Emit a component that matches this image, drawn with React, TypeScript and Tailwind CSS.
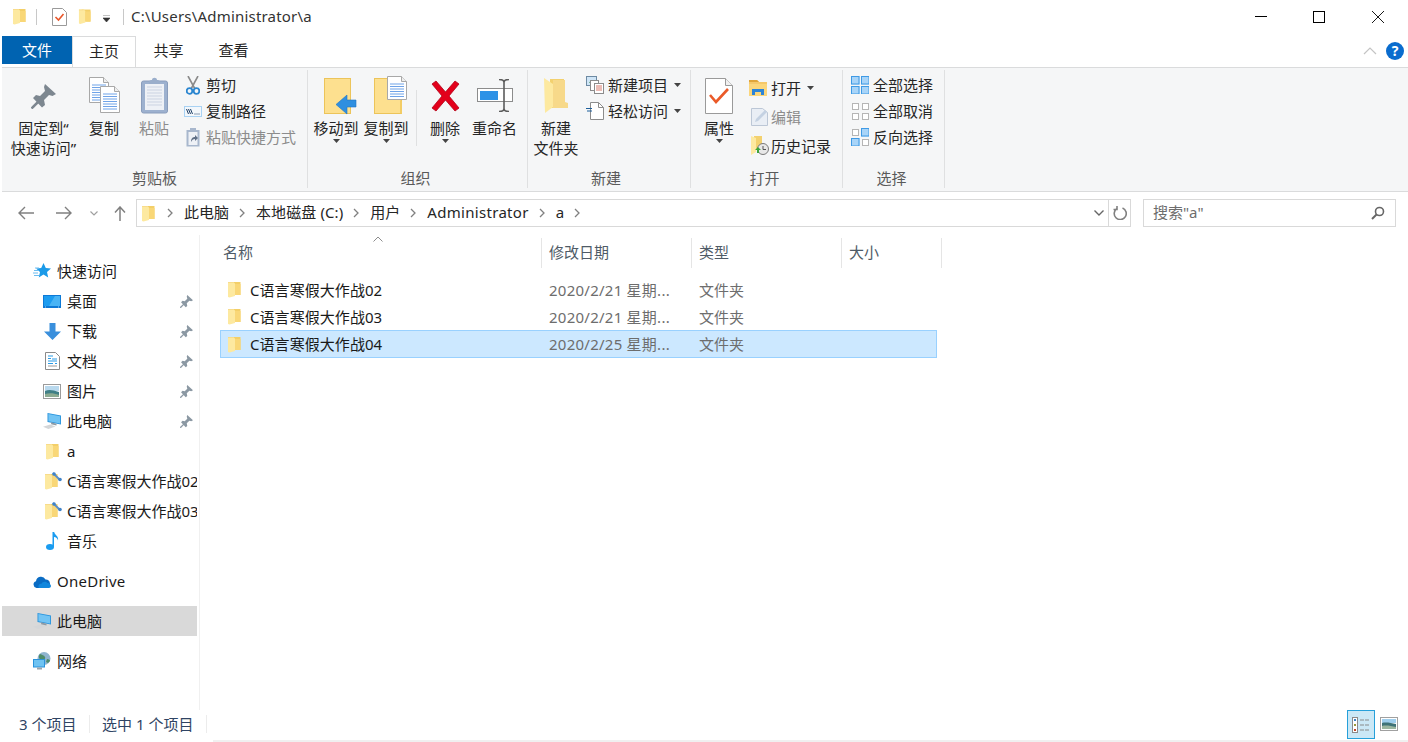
import React from "react";

type SP = { className?: string };

const Folder = ({ className = "w-[14px] h-[17px]" }: SP) => (
  <svg viewBox="0 0 14 17" className={className}>
    <path d="M4 1h9.500v13H4z" fill="#f3cf68" />
    <path d="M1 1h5l2 1.500V15L2.500 16.500 1 16z" fill="#fde9a0" />
    <path d="M1 1h5v1H1z" fill="#f8dc8c" />
    <path d="M8 3h5.500v11H8z" fill="#f9d777" />
  </svg>
);

const Pin = ({ className = "w-[13px] h-[13px]", color = "#8b98a3" }: SP & { color?: string }) => (
  <svg viewBox="0 0 25 25" className={className}>
    <path d="M14 0l11 10-3.500 2-3.500-1-5 5 1 5-3 2.500L2 14l3-3 4 1 5-5-1-4z" fill={color} />
    <path d="M0.500 24.500L8 17" stroke={color} strokeWidth="2.500" />
  </svg>
);

const Doc = ({ x, y, w, h }: { x: number; y: number; w: number; h: number }) => {
  const lines = [];
  for (let ly = y + 8; ly < y + h - 2; ly += 2.5) lines.push(ly);
  return (
    <g>
      <path d={`M${x + 0.5} ${y + 0.5}h${w - 6}l5 5v${h - 6}h-${w - 1}z`} fill="#fff" stroke="#a8a8a8" />
      <path d={`M${x + w - 5.5} ${y + 0.5}v5h5`} fill="#eee" stroke="#a8a8a8" />
      {lines.map((ly) => (
        <path key={ly} d={`M${x + 3} ${ly}h${w - 6}`} stroke="#6fa3e8" strokeWidth="1" />
      ))}
    </g>
  );
};

const Caret = ({ className = "" }: SP) => (
  <svg viewBox="0 0 7 4" className={`w-[7px] h-[4px] ${className}`}>
    <path d="M0 0h7L3.500 4z" fill="#444" />
  </svg>
);

const Chev = ({ className = "" }: SP) => (
  <svg viewBox="0 0 6 10" className={`w-[6px] h-[10px] shrink-0 ${className}`}>
    <path d="M1 1l4 4-4 4" fill="none" stroke="#808080" strokeWidth="1.300" />
  </svg>
);

function Large({
  w,
  icon,
  lines,
  caret,
  dim,
}: {
  w: string;
  icon: React.ReactNode;
  lines: string[];
  caret?: boolean;
  dim?: boolean;
}) {
  return (
    <div className={`${w} flex flex-col items-center shrink-0`}>
      <div className="h-[43px] w-full flex justify-center items-start">{icon}</div>
      {lines.map((l) => (
        <div key={l} className={`h-[20px] leading-[20px] whitespace-nowrap ${dim ? "text-[#8c8c8c]" : "text-[#262626]"}`}>
          {l}
        </div>
      ))}
      {caret && <Caret className="mt-[1px]" />}
    </div>
  );
}

function Small({
  icon,
  label,
  caret,
  dim,
  h,
  iw,
}: {
  icon: React.ReactNode;
  label: string;
  caret?: boolean;
  dim?: boolean;
  h: string;
  iw: string;
}) {
  return (
    <div className={`${h} flex items-center whitespace-nowrap`}>
      <div className={`${iw} flex justify-center shrink-0`}>{icon}</div>
      <span className={dim ? "text-[#8c8c8c]" : "text-[#262626]"}>{label}</span>
      {caret && <Caret className="ml-[6px]" />}
    </div>
  );
}

function Group({ w, label, pr = "", children }: { w: string; label: string; pr?: string; children: React.ReactNode }) {
  return (
    <div className={`${w} flex flex-col shrink-0 mb-[3px] mt-[2px] border-r border-[#dfe0e1]`}>
      <div className="h-[99px] pt-[5px] flex">{children}</div>
      <div className={`h-[20px] leading-[20px] text-center text-[#5a5a5a] ${pr}`}>{label}</div>
    </div>
  );
}

const Grid = ({ cells }: { cells: boolean[] }) => (
  <svg viewBox="0 0 18 18" className="w-[18px] h-[18px]">
    {[0, 1, 2, 3].map((i) => {
      const x = i % 2 ? 10 : 0;
      const y = i > 1 ? 10 : 0;
      return cells[i] ? (
        <g key={i}>
          <rect x={x} y={y} width="8.500" height="8.500" fill="#a8d4f8" />
          <rect x={x + 0.5} y={y + 0.5} width="7.500" height="7.500" fill="none" stroke="#3f9ae5" />
        </g>
      ) : (
        <rect key={i} x={x + 1.5} y={y + 1.5} width="6" height="6" fill="#fff" stroke="#b5b5b5" />
      );
    })}
  </svg>
);

const PC = ({ className = "w-[20px] h-[18px]" }: SP) => (
  <svg viewBox="0 0 20 18" className={className}>
    <path d="M0 15.500l8-2.500 6 2-8 3z" fill="#d4d6d8" />
    <path d="M5 0l15 3v10L5 10z" fill="#2a94dc" />
    <path d="M6 1.200l13 2.600v8L6 9.200z" fill="#72c4f4" />
    <path d="M9 10.500l6 1.500v2l-6-1.500z" fill="#8e9ba5" />
  </svg>
);

const QuickStar = () => (
  <svg viewBox="0 0 18 16" className="w-[18px] h-[16px]">
    <path d="M10.500 0l2.300 5 5.200.5-4 3.500 1.200 5.500-4.700-2.900-4.700 2.900L7 9 3 5.500 8.200 5z" fill="#1b9ae8" />
    <path d="M0 10h5M1 7.500h4M2 5h4M1 12.500h5" stroke="#6cbcf0" strokeWidth="1" />
  </svg>
);

const Desktop = () => (
  <svg viewBox="0 0 18 13" className="w-[18px] h-[13px]">
    <rect x="0" y="0" width="18" height="13" fill="#0d79d6" />
    <rect x="1" y="1" width="16" height="10" fill="#1c9cf0" />
    <path d="M6 11l6-10h5v10z" fill="#49b4f5" />
    <path d="M2 12h.800M15 12h.800" stroke="#fff" strokeWidth=".800" />
  </svg>
);

const Down = () => (
  <svg viewBox="0 0 17 17" className="w-[17px] h-[17px]">
    <path d="M5.500 0h6v8.500H17L8.500 17 0 8.500h5.500z" fill="#3a8fdc" />
  </svg>
);

const Docs = () => (
  <svg viewBox="0 0 15 18" className="w-[15px] h-[18px]">
    <path d="M.500.500h10l4 4v13H.500z" fill="#fff" stroke="#8a8a8a" />
    <path d="M3 4h5M3 6.500h3" stroke="#2b9be6" strokeWidth="1.200" />
    <path d="M7 7h5M3 9h9M3 11.500h5M10 11.500h2" stroke="#2b9be6" strokeWidth="1" />
    <path d="M3 14h9" stroke="#9a9a9a" strokeWidth="1" />
  </svg>
);

const Pic = () => (
  <svg viewBox="0 0 18 15" className="w-[18px] h-[15px]">
    <rect x=".500" y=".500" width="17" height="14" fill="#fff" stroke="#9b9b9b" />
    <rect x="2" y="2" width="14" height="5" fill="#b9d9ee" />
    <path d="M2 7c4-2 8-1 14 1v5H2z" fill="#3f7f86" />
    <path d="M2 10c4-1 9-1 14 1v2H2z" fill="#8cab91" />
  </svg>
);

const SharedFolder = () => (
  <div className="relative w-[17px] h-[17px]">
    <Folder />
    <svg viewBox="0 0 10 10" className="absolute -right-[1px] -top-[1px] w-[10px] h-[10px]">
      <path d="M1 1l7 7" stroke="#5b8fc9" strokeWidth="2" />
      <circle cx="2" cy="2" r="1.800" fill="#3f83c9" />
      <circle cx="8" cy="7.500" r="1.800" fill="#3f83c9" />
    </svg>
  </div>
);

const Music = () => (
  <svg viewBox="0 0 13 18" className="w-[13px] h-[18px]">
    <ellipse cx="4" cy="15" rx="4" ry="3" fill="#1a9cf0" />
    <path d="M6.500 0h1.700c.300 3 4.800 4 3.800 8.500C11.500 6.500 10 5 8 5v10H6.500z" fill="#1a9cf0" />
  </svg>
);

const Cloud = () => (
  <svg viewBox="0 0 18 13" className="w-[18px] h-[13px]">
    <path d="M3.500 13A3.500 3.500 0 0 1 3 6.200 5 5 0 0 1 12.500 4.600 4.300 4.300 0 0 1 14 13z" fill="#0a6cc4" />
    <path d="M6 13c-1.500-2 0-4.500 2.500-4.300C9.500 6.500 13 6 14.300 8 16.500 8 18 9.500 18 11c0 1.200-1 2-2 2z" fill="#1187dd" />
  </svg>
);

const Net = () => (
  <svg viewBox="0 0 18 18" className="w-[18px] h-[18px]">
    <circle cx="11" cy="6.500" r="6.500" fill="#8fb4cf" />
    <path d="M7 2c2 1 4 1 5 3s-2 4-4 3-3-4-1-6z" fill="#4f8c6a" />
    <path d="M14 7c2 0 3 1 3 2l-2 2-2-1z" fill="#4f8c6a" />
    <rect x="0" y="7" width="12" height="8.500" fill="#2a93dc" />
    <rect x="1" y="8" width="10" height="6.500" fill="#6fc3f2" />
    <rect x="4" y="15.500" width="5" height="2" fill="#9aa5ad" />
  </svg>
);

function Nav({
  icon,
  label,
  indent,
  pin,
  selected,
  className = "",
  labelClass = "",
}: {
  icon: React.ReactNode;
  label: string;
  indent?: boolean;
  pin?: boolean;
  selected?: boolean;
  className?: string;
  labelClass?: string;
}) {
  return (
    <div
      className={`h-[30px] w-[195px] flex items-center overflow-hidden whitespace-nowrap ${
        indent ? "pl-[41px]" : "pl-[31px]"
      } ${selected ? "bg-[#d9d9d9]" : ""} ${className}`}
    >
      <div className="w-[18px] flex justify-center shrink-0">{icon}</div>
      <span className={`ml-[6px] text-[#1a1a1a] ${labelClass}`}>{label}</span>
      {pin && (
        <div className="ml-auto mr-[4px] shrink-0">
          <Pin />
        </div>
      )}
    </div>
  );
}

function FileRow({ name, date, selected }: { name: string; date: string; selected?: boolean }) {
  return (
    <div
      className={`w-[717px] flex items-center whitespace-nowrap border ${
        selected ? "h-[28px] bg-[#cce8ff] border-[#99d1ff]" : "h-[27px] border-transparent"
      }`}
    >
      <div className="w-[29px] pl-[6px] shrink-0 flex">
        <Folder />
      </div>
      <div className="w-[299px] text-[#1a1a1a] shrink-0 tracking-[0.06px]">{name}</div>
      <div className="w-[150px] text-[#6d6d6d] shrink-0 tracking-[0.25px]">{date}</div>
      <div className="text-[#6d6d6d]">文件夹</div>
    </div>
  );
}

function HeadCell({ w, label, pl = "pl-[7px]" }: { w: string; label: string; pl?: string }) {
  return (
    <div className={`${w} h-[30px] flex items-center border-r border-[#e5e5e5] ${pl} pb-[2px] text-[#4f5b67] shrink-0`}>
      {label}
    </div>
  );
}

export default function App() {
  return (
    <div className="w-[1408px] h-[742px] overflow-hidden bg-white flex flex-col font-['Noto_Sans','Noto_Sans_CJK_SC',sans-serif] text-[15px] leading-[20px]">
      {/* title bar */}
      <div className="h-[36px] flex items-center shrink-0 pb-[3px]">
        <div className="ml-[12px]">
          <Folder className="w-[14px] h-[17px]" />
        </div>
        <div className="ml-[10px] w-px h-[16px] bg-[#c8c8c8]" />
        <svg viewBox="0 0 15 18" className="ml-[15px] w-[15px] h-[18px]">
          <path d="M.500.500h10l4 4v13H.500z" fill="#fff" stroke="#9a9a9a" />
          <path d="M3.500 9l3 3 5-6" fill="none" stroke="#e8562a" strokeWidth="1.600" />
        </svg>
        <div className="ml-[11px]">
          <Folder className="w-[13px] h-[17px]" />
        </div>
        <svg viewBox="0 0 7 7" className="ml-[12px] w-[7px] h-[7px] mt-[3px]">
          <path d="M0 0h7M0 3h7L3.500 7z" stroke="#333" strokeWidth=".600" fill="#333" />
        </svg>
        <div className="ml-[13px] w-px h-[16px] bg-[#c8c8c8]" />
        <div className="ml-[7px] text-[#333] whitespace-nowrap pb-[1px] tracking-[0.2px]">C:\Users\Administrator\a</div>
        <div className="ml-auto flex items-center">
          <svg viewBox="0 0 12 12" className="w-[12px] h-[12px]">
            <path d="M0 5.500h12" stroke="#000" />
          </svg>
          <svg viewBox="0 0 12 12" className="ml-[46px] w-[12px] h-[12px]">
            <rect x=".500" y=".500" width="11" height="11" fill="none" stroke="#000" />
          </svg>
          <svg viewBox="0 0 12 12" className="ml-[47px] mr-[24px] w-[12px] h-[12px]">
            <path d="M0 0l12 12M12 0L0 12" stroke="#000" strokeWidth=".900" />
          </svg>
        </div>
      </div>

      {/* tabs */}
      <div className="h-[31px] flex shrink-0 pl-[2px] relative">
        <div className="w-[70px] h-[28px] bg-[#0063b1] text-white flex items-center justify-center">文件</div>
        <div className="w-[64px] h-[31px] bg-white border border-b-0 border-[#dadbdc] flex items-center justify-center pb-[3px] text-[#262626]">
          主页
        </div>
        <div className="w-[65px] h-[28px] flex items-center justify-center text-[#262626]">共享</div>
        <div className="w-[65px] h-[28px] flex items-center justify-center text-[#262626]">查看</div>
        <div className="ml-auto flex items-center h-[30px] mr-[4px]">
          <svg viewBox="0 0 14 8" className="w-[14px] h-[8px]">
            <path d="M1 7l6-6 6 6" fill="none" stroke="#c4c4c4" strokeWidth="1.200" />
          </svg>
          <div className="ml-[9px] w-[18px] h-[18px] rounded-full bg-[#0a6cce] text-white flex items-center justify-center text-[14px] font-bold">
            ?
          </div>
        </div>
      </div>

      {/* ribbon */}
      <div className="h-[125px] ml-[2px] bg-[#f5f6f7] border-t border-b border-[#dadbdc] flex shrink-0">
        <Group w="w-[306px]" label="剪贴板">
          <div className="flex pl-[5px]">
            <Large
              w="w-[73px]"
              lines={["固定到“", "快速访问”"]}
              icon={<Pin className="w-[25px] h-[25px] mt-[9px]" color="#7d8790" />}
            />
            <Large
              w="w-[48px]"
              lines={["复制"]}
              icon={
                <svg viewBox="0 0 31 37" className="w-[31px] h-[37px] mt-[2px]">
                  <Doc x={0} y={0} w={20} h={26} />
                  <Doc x={11} y={9} w={20} h={27} />
                </svg>
              }
            />
            <div className="w-[2px]" />
            <Large
              w="w-[48px]"
              lines={["粘贴"]}
              dim
              icon={
                <svg viewBox="0 0 27 37" className="w-[27px] h-[37px] mt-[2px]">
                  <rect x="0.500" y="4" width="26" height="32" rx="2" fill="#9db1cf" stroke="#8a9dbc" />
                  <rect x="4" y="7" width="19" height="26" fill="#eef1f6" />
                  {[10, 13, 16, 19, 22, 25, 28].map((y) => (
                    <path key={y} d={`M6 ${y}h15`} stroke="#cbd3e2" />
                  ))}
                  <path d="M8 5c0-2 3-2 3-2 0-3 5-3 5 0 0 0 3 0 3 2v2H8z" fill="#9aaecb" />
                </svg>
              }
            />
          </div>
          <div className="ml-[6px] -mt-[3px] flex flex-col">
            <Small
              h="h-[26px]"
              iw="w-[22px] pr-[5px]"
              label="剪切"
              icon={
                <svg viewBox="0 0 14 19" className="w-[14px] h-[19px]">
                  <path d="M2 0l7 13M12 0L5 13" stroke="#8a8a8a" strokeWidth="1.600" />
                  <circle cx="3.500" cy="15" r="2.800" fill="none" stroke="#2b86d0" strokeWidth="1.800" />
                  <circle cx="10.500" cy="15" r="2.800" fill="none" stroke="#2b86d0" strokeWidth="1.800" />
                </svg>
              }
            />
            <Small
              h="h-[26px]"
              iw="w-[22px] pr-[4px]"
              label="复制路径"
              icon={
                <svg viewBox="0 0 18 11" className="w-[18px] h-[11px]">
                  <rect x="0" y="0" width="18" height="11" fill="#a9d2f3" />
                  <rect x="1" y="1" width="16" height="9" fill="#f3f7fb" />
                  <path d="M2.500 3l2 5M4.500 3l2 5M6.500 3l2 5" stroke="#1f3f66" strokeWidth="1" />
                  <path d="M10.500 8h1M12.500 8h1M14.500 8h1" stroke="#1f3f66" strokeWidth="1" />
                </svg>
              }
            />
            <Small
              h="h-[26px]"
              iw="w-[22px] pr-[5px]"
              label="粘贴快捷方式"
              dim
              icon={
                <svg viewBox="0 0 14 19" className="w-[14px] h-[19px]">
                  <rect x=".500" y="2" width="13" height="16.500" fill="#a8b7cd" />
                  <rect x="2.500" y="4" width="9" height="13" fill="#eef1f6" />
                  <path d="M4 0h6v3H4z" fill="#a8b7cd" />
                  <path d="M5 14c0-4 2-5 4-5V7l3 3-3 3v-2c-2 0-3 1-4 3z" fill="#5f6f86" />
                </svg>
              }
            />
          </div>
        </Group>

        <Group w="w-[220px]" label="组织" pr="pr-[4px]">
          <div className="flex pl-[3px]">
            <Large
              w="w-[50px]"
              lines={["移动到"]}
              caret
              icon={
                <svg viewBox="0 0 33 37" className="w-[33px] h-[37px] mt-[3px] ml-[9px]">
                  <rect x=".500" y=".500" width="26" height="35" fill="#fde08f" stroke="#ecc45a" />
                  <path d="M23 17v5h9v7h-9v7L12 26.500z" fill="#2f8fe0" stroke="#2176c2" strokeWidth=".600" />
                </svg>
              }
            />
            <Large
              w="w-[50px]"
              lines={["复制到"]}
              caret
              icon={
                <svg viewBox="0 0 33 38" className="w-[33px] h-[38px] mt-[1px] ml-[9px]">
                  <rect x=".500" y="2.500" width="27" height="35" fill="#fde08f" stroke="#ecc45a" />
                  <path d="M28 38V26c0-2-2-3-2-1v12z" fill="#f3cd66" />
                  <Doc x={13} y={0} w={20} h={24} />
                </svg>
              }
            />
            <div className="w-px h-[56px] bg-[#dfe0e1] mt-[15px] ml-[5px]" />
            <div className="w-[4px]" />
            <Large
              w="w-[48px]"
              lines={["删除"]}
              caret
              icon={
                <svg viewBox="0 0 31 32" className="w-[31px] h-[32px] mt-[5px]">
                  <path d="M2 4l4-3 9.500 11L25 1l4 3-10 12 10 12-4 3-9.500-11L6 31l-4-3 10-12z" fill="#e3001b" stroke="#b40016" strokeWidth=".800" />
                </svg>
              }
            />
            <div className="w-[1px]" />
            <Large
              w="w-[49px]"
              lines={["重命名"]}
              icon={
                <svg viewBox="0 0 36 33" className="w-[36px] h-[33px] mt-[4px]">
                  <rect x=".500" y="9.500" width="35" height="13" fill="#fff" stroke="#8c8c8c" />
                  <rect x="3" y="12" width="18" height="9" fill="#2e92e6" />
                  <path d="M22 .500c3 0 5 1 5 3v26c0 2 2 3 5 3M32 .500c-3 0-5 1-5 3M22 32.500c3 0 5-1 5-3" fill="none" stroke="#5c5c5c" strokeWidth="1.600" />
                </svg>
              }
            />
          </div>
        </Group>

        <Group w="w-[163px]" label="新建" pr="pr-[6px]">
          <div className="flex pl-[4px]">
            <Large
              w="w-[48px]"
              lines={["新建", "文件夹"]}
              icon={
                <svg viewBox="0 0 24 35" className="w-[24px] h-[35px] mt-[3px]">
                  <path d="M6 1h14v29H6z" fill="#f3d16f" />
                  <path d="M0 0l9 6v23L1 35z" fill="#fde9a0" />
                  <path d="M9 2h12v22l3 1v5H9z" fill="#f7d98a" />
                </svg>
              }
            />
          </div>
          <div className="ml-[6px] -mt-[3px] flex flex-col">
            <Small
              h="h-[26px]"
              iw="w-[22px] pr-[4px]"
              label="新建项目"
              caret
              icon={
                <svg viewBox="0 0 18 18" className="w-[18px] h-[18px]">
                  <rect x=".500" y=".500" width="10" height="9" fill="#cfe5f7" stroke="#6d8aa3" />
                  <path d="M3 7l2-3 3 3" fill="#4e9a58" />
                  <rect x="4.500" y="4.500" width="8" height="10" fill="#fff" stroke="#8c8c8c" />
                  <rect x="8.500" y="7.500" width="9" height="10" fill="#fff" stroke="#8c8c8c" />
                  <path d="M10 10h6M10 12h6M10 14h6" stroke="#d97a6c" />
                </svg>
              }
            />
            <Small
              h="h-[26px]"
              iw="w-[22px] pr-[4px]"
              label="轻松访问"
              caret
              icon={
                <svg viewBox="0 0 18 18" className="w-[18px] h-[18px]">
                  <path d="M4.500.500h8l5 5v12h-13z" fill="#fff" stroke="#8c8c8c" />
                  <path d="M12.500.500v5h5" fill="none" stroke="#8c8c8c" />
                  <path d="M0 6.500h6M1 9h5" stroke="#1d5f9c" strokeWidth="1.200" />
                </svg>
              }
            />
          </div>
        </Group>

        <Group w="w-[152px]" label="打开" pr="pr-[4px]">
          <div className="flex pl-[6px]">
            <Large
              w="w-[44px]"
              lines={["属性"]}
              caret
              icon={
                <svg viewBox="0 0 28 36" className="w-[28px] h-[36px] mt-[3px]">
                  <path d="M.500.500h20l7 7v28H.500z" fill="#fff" stroke="#9a9a9a" />
                  <path d="M20.500.500v7h7" fill="#f0f0f0" stroke="#9a9a9a" />
                  <path d="M5 17l6 7L23 11" fill="none" stroke="#ea5a28" strokeWidth="2.600" />
                </svg>
              }
            />
          </div>
          <div className="ml-[8px] -mt-[2px] flex flex-col">
            <Small
              h="h-[29px]"
              iw="w-[22px] pr-[4px]"
              label="打开"
              caret
              icon={
                <svg viewBox="0 0 18 16" className="w-[18px] h-[16px]">
                  <path d="M0 0h8l2 2h8v14H0z" fill="#f5c86a" />
                  <path d="M0 0h8l2 2H0z" fill="#e0a53a" />
                  <path d="M0 4h18v12H0z" fill="#fbd67c" />
                  <path d="M3 15V9h12v6h-3v-3H6v3z" fill="#2c84d8" />
                </svg>
              }
            />
            <Small
              h="h-[29px]"
              iw="w-[22px] pr-[2px]"
              label="编辑"
              dim
              icon={
                <svg viewBox="0 0 17 18" className="w-[17px] h-[18px]">
                  <path d="M.500.500h11l5 4v13H.500z" fill="#e9eef5" stroke="#bcc7d6" />
                  <path d="M4 14l1-3 9-9 2 2-9 9z" fill="#c4d1e2" />
                </svg>
              }
            />
            <Small
              h="h-[29px]"
              iw="w-[22px]"
              label="历史记录"
              icon={
                <svg viewBox="0 0 18 19" className="w-[18px] h-[19px]">
                  <path d="M3 0h8v14H3z" fill="#f3d16f" />
                  <path d="M0 0l5 2v14l-5 3z" fill="#fde9a0" />
                  <circle cx="12" cy="13" r="5.500" fill="#e8e8e8" stroke="#7a7a7a" />
                  <path d="M12 10v3.500h3" fill="none" stroke="#555" />
                  <path d="M7 11l-3 3h2v3h2v-3h2z" fill="#3ca33a" />
                </svg>
              }
            />
          </div>
        </Group>

        <Group w="w-[102px]" label="选择" pr="pr-[4px]">
          <div className="ml-[8px] -mt-[3px] flex flex-col">
            <Small h="h-[26px]" iw="w-[22px] pr-[4px]" label="全部选择" icon={<Grid cells={[true, true, true, true]} />} />
            <Small h="h-[26px]" iw="w-[22px] pr-[4px]" label="全部取消" icon={<Grid cells={[false, false, false, false]} />} />
            <Small h="h-[26px]" iw="w-[22px] pr-[4px]" label="反向选择" icon={<Grid cells={[false, true, true, false]} />} />
          </div>
        </Group>
      </div>

      {/* address bar */}
      <div className="h-[43px] flex items-center shrink-0 pb-[1px]">
        <svg viewBox="0 0 16 14" className="ml-[18px] w-[16px] h-[14px]">
          <path d="M7 1L1 7l6 6M1 7h15" fill="none" stroke="#808080" strokeWidth="1.400" />
        </svg>
        <svg viewBox="0 0 16 14" className="ml-[22px] w-[16px] h-[14px]">
          <path d="M9 1l6 6-6 6M15 7H0" fill="none" stroke="#808080" strokeWidth="1.400" />
        </svg>
        <svg viewBox="0 0 8 5" className="ml-[18px] w-[8px] h-[5px]">
          <path d="M.500.500L4 4 7.500.500" fill="none" stroke="#a0a0a0" strokeWidth="1.200" />
        </svg>
        <svg viewBox="0 0 12 15" className="ml-[16px] w-[12px] h-[15px]">
          <path d="M1 6.500L6 1l5 5.500M6 1v14" fill="none" stroke="#808080" strokeWidth="1.500" />
        </svg>
        <div className="ml-[10px] w-[995px] h-[28px] border border-[#d9d9d9] flex items-center text-[#262626] whitespace-nowrap pl-[4px]">
          <Folder className="w-[14px] h-[17px]" />
          <Chev className="ml-[12px]" />
          <span className="ml-[11px] mb-[2px]">此电脑</span>
          <Chev className="ml-[10px]" />
          <span className="ml-[11px] mb-[2px] tracking-[0.1px]">本地磁盘 (C:)</span>
          <Chev className="ml-[10px]" />
          <span className="ml-[11px] mb-[2px]">用户</span>
          <Chev className="ml-[10px]" />
          <span className="ml-[11px] mb-[2px] tracking-[0.3px]">Administrator</span>
          <Chev className="ml-[10px]" />
          <span className="ml-[11px] mb-[2px]">a</span>
          <Chev className="ml-[10px]" />
          <div className="ml-auto flex items-center h-full">
            <svg viewBox="0 0 10 6" className="w-[10px] h-[6px]">
              <path d="M.500.500L5 5 9.500.500" fill="none" stroke="#666" strokeWidth="1.400" />
            </svg>
            <div className="ml-[4px] w-px h-full bg-[#d9d9d9]" />
            <svg viewBox="0 0 14 14" className="ml-[4px] mr-[3px] w-[14px] h-[14px]">
              <path d="M4 2.500A6 6 0 1 0 9.500 2M4 0v3.500H.500" fill="none" stroke="#808080" strokeWidth="1.600" />
            </svg>
          </div>
        </div>
        <div className="ml-[12px] w-[253px] h-[28px] border border-[#d9d9d9] flex items-center text-[#6d6d6d] pl-[9px] pr-[10px] whitespace-nowrap">
          <span className="mb-[2px]">搜索"a"</span>
          <svg viewBox="0 0 14 14" className="ml-auto w-[14px] h-[14px]">
            <circle cx="8.500" cy="5.500" r="4" fill="none" stroke="#666" strokeWidth="1.600" />
            <path d="M5.500 8.500L1 13" stroke="#666" strokeWidth="2" />
          </svg>
        </div>
      </div>

      {/* main */}
      <div className="h-[475px] flex shrink-0">
        <div className="w-[200px] h-full border-r border-[#f0f0f0] pl-[2px] pt-[21px] shrink-0 flex flex-col">
          <Nav icon={<QuickStar />} label="快速访问" />
          <Nav indent pin icon={<Desktop />} label="桌面" />
          <Nav indent pin icon={<Down />} label="下载" />
          <Nav indent pin icon={<Docs />} label="文档" />
          <Nav indent pin icon={<Pic />} label="图片" />
          <Nav indent pin icon={<PC />} label="此电脑" />
          <Nav indent icon={<Folder />} label="a" />
          <Nav indent icon={<SharedFolder />} label="C语言寒假大作战02" />
          <Nav indent icon={<SharedFolder />} label="C语言寒假大作战03" />
          <Nav indent icon={<Music />} label="音乐" />
          <Nav className="mt-[10px]" icon={<Cloud />} label="OneDrive" labelClass="tracking-[0.25px]" />
          <Nav className="mt-[10px]" selected icon={<PC />} label="此电脑" />
          <Nav className="mt-[10px]" icon={<Net />} label="网络" />
        </div>
        <div className="flex-1 pl-[20px] pt-[3px] relative">
          <svg viewBox="0 0 10 6" className="absolute left-[173px] top-[1px] w-[10px] h-[6px]">
            <path d="M.500 5.500L5 1l4.500 4.500" fill="none" stroke="#8c8c8c" />
          </svg>
          <div className="flex">
            <HeadCell w="w-[322px]" label="名称" pl="pl-[3px]" />
            <HeadCell w="w-[150px]" label="修改日期" />
            <HeadCell w="w-[150px]" label="类型" />
            <HeadCell w="w-[100px]" label="大小" />
          </div>
          <div className="mt-[8px] flex flex-col">
            <FileRow name="C语言寒假大作战02" date="2020/2/21 星期..." />
            <FileRow name="C语言寒假大作战03" date="2020/2/21 星期..." />
            <FileRow selected name="C语言寒假大作战04" date="2020/2/25 星期..." />
          </div>
        </div>
      </div>

      {/* status bar */}
      <div className="h-[32px] flex items-center shrink-0 relative text-[#2f4463] whitespace-nowrap pb-[4px]">
        <span className="ml-[19px] w-[70px]">3 个项目</span>
        <div className="w-px h-[18px] bg-[#ececec]" />
        <span className="ml-[12px] w-[104px]">选中 1 个项目</span>
        <div className="w-px h-[18px] bg-[#ececec]" />
        <div className="ml-auto mr-[10px] flex items-start self-start">
          <div className="w-[28px] h-[29px] border border-[#26a0da] bg-[#cbe8f6] flex items-center justify-center">
            <svg viewBox="0 0 18 16" className="w-[18px] h-[16px]">
              <rect x=".500" y=".500" width="5" height="15" fill="#fff" stroke="#8a8a8a" />
              <rect x="2" y="2" width="2" height="2" fill="#3b82c4" />
              <rect x="2" y="7" width="2" height="2" fill="#9a9a3a" />
              <rect x="2" y="12" width="2" height="2" fill="#c0492b" />
              <path d="M8 3h4M13 3h4M8 8h4M13 8h4M8 13h4M13 13h4" stroke="#8a8a8a" strokeWidth="1.200" />
            </svg>
          </div>
          <svg viewBox="0 0 18 14" className="ml-[5px] mt-[7px] w-[18px] h-[14px]">
            <rect x=".500" y=".500" width="17" height="13" fill="#fff" stroke="#a0a0a0" />
            <rect x="2" y="2" width="14" height="4" fill="#9fcfee" />
            <path d="M2 6c4-1 9 0 14 1v5H2z" fill="#3f7378" />
            <path d="M2 9c4-1 9 0 14 1v2H2z" fill="#9bb6a0" />
          </svg>
        </div>
        <div className="absolute left-[213px] right-0 bottom-0 h-[2px] bg-[#f0f0f0]" />
      </div>
    </div>
  );
}
